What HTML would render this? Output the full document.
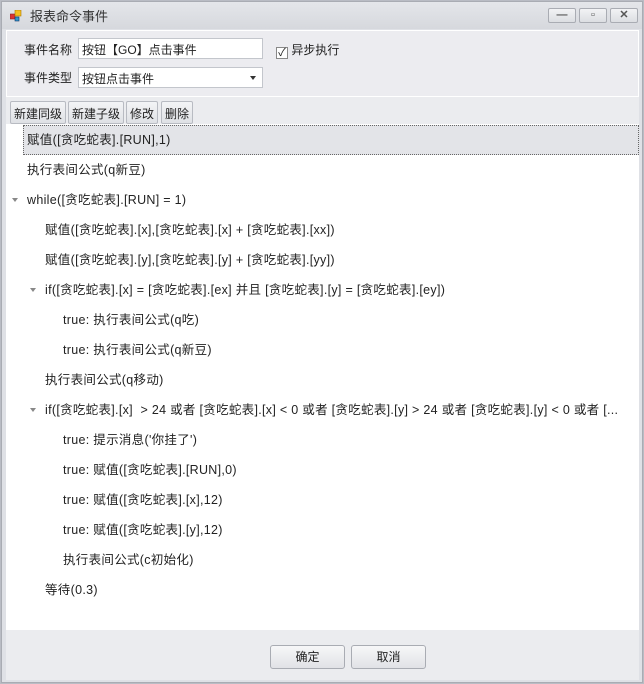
<!DOCTYPE html>
<html><head><meta charset="utf-8"><style>
*{box-sizing:border-box;margin:0;padding:0}
body{width:644px;height:684px;overflow:hidden;background:#b9bcc4;font-family:"Liberation Sans","Noto Sans CJK SC","WenQuanYi Zen Hei",sans-serif;font-size:12px;color:#222;position:relative}
.win{position:absolute;left:1px;top:1px;width:642px;height:682px;background:#dfe1e6;border:1px solid #a9acb3}
.title{position:absolute;left:0;top:0;width:640px;height:27px;background:linear-gradient(#e4e6ea,#d6d8dd)}
.title span{position:absolute;left:28px;top:4px;font-size:13px;color:#333}
.ic{position:absolute;left:8px;top:8px;width:12px;height:12px}
.tb{position:absolute;top:6px;width:28px;height:15px;border:1px solid #a9acb3;border-radius:2px;background:linear-gradient(#f2f3f5,#dcdee2);color:#555;text-align:center;font-size:11px;line-height:13px;font-weight:bold}
.client{position:absolute;left:4px;top:28px;width:633px;height:650px;background:#ebecef}
.top{position:absolute;left:0;top:0;width:633px;height:67px;border:1px solid #fff;background:#ececf0}
.lbl{position:absolute;font-size:12px}
.inp{position:absolute;background:#fff;border:1px solid #c3c6cc;height:21px;padding:2px 3px;font-size:12px}
.btn{position:absolute;top:71px;height:23px;border:1px solid #b8bbc2;border-radius:2px;background:linear-gradient(#f3f4f6,#dfe1e5);padding:3px 3px;font-size:12px}
.tree{position:absolute;left:0;top:94px;width:633px;height:506px;background:#fff}
.row{position:absolute;height:18px;white-space:nowrap;font-size:12.5px;letter-spacing:0.3px}
.arr{position:absolute;width:0;height:0;border-left:3px solid transparent;border-right:3px solid transparent;border-top:4px solid #888}
.sel{position:absolute;left:17px;top:1px;width:616px;height:30px;background:#e3e4e8;border:1px dotted #666}
.ok{position:absolute;top:615px;width:75px;height:24px;border:1px solid #a9acb3;border-radius:3px;background:linear-gradient(#f7f7f8,#e1e2e6);text-align:center;line-height:22px;font-size:12px}
</style></head><body>
<div class="win">
<div class="title">
<svg class="ic" viewBox="0 0 12 12"><rect x="0" y="4" width="5" height="5" fill="#d33" stroke="#822" stroke-width=".6"/><rect x="5" y="0" width="6" height="6" fill="#f4c020" stroke="#a70" stroke-width=".6"/><rect x="5" y="7" width="4" height="4" fill="#39c" stroke="#136" stroke-width=".6"/></svg>
<span>报表命令事件</span>
<div class="tb" style="left:546px">—</div>
<div class="tb" style="left:577px">▫</div>
<div class="tb" style="left:608px">✕</div>
</div>
<div class="client">
<div class="top">
<div class="lbl" style="left:17px;top:10px">事件名称</div>
<div class="inp" style="left:71px;top:7px;width:185px">按钮【GO】点击事件</div>
<div class="lbl" style="left:269px;top:10px"><span style="display:inline-block;width:12px;height:12px;border:1px solid #888;background:#fff;vertical-align:-2px;font-size:11px;line-height:10px;text-align:center">✓</span> 异步执行</div>
<div class="lbl" style="left:17px;top:38px">事件类型</div>
<div class="inp" style="left:71px;top:36px;width:185px">按钮点击事件<span style="position:absolute;right:6px;top:8px;border-left:3px solid transparent;border-right:3px solid transparent;border-top:4px solid #333"></span></div>
</div>
<div class="btn" style="left:4px">新建同级</div>
<div class="btn" style="left:62px">新建子级</div>
<div class="btn" style="left:120px">修改</div>
<div class="btn" style="left:155px">删除</div>
<div class="tree">
<div class="sel"></div>
<div class="row" style="left:21px;top:5px">赋值([贪吃蛇表].[RUN],1)</div>
<div class="row" style="left:21px;top:35px">执行表间公式(q新豆)</div>
<div class="arr" style="left:6px;top:74px"></div>
<div class="row" style="left:21px;top:65px">while([贪吃蛇表].[RUN] = 1)</div>
<div class="row" style="left:39px;top:95px">赋值([贪吃蛇表].[x],[贪吃蛇表].[x] + [贪吃蛇表].[xx])</div>
<div class="row" style="left:39px;top:125px">赋值([贪吃蛇表].[y],[贪吃蛇表].[y] + [贪吃蛇表].[yy])</div>
<div class="arr" style="left:24px;top:164px"></div>
<div class="row" style="left:39px;top:155px">if([贪吃蛇表].[x] = [贪吃蛇表].[ex] 并且 [贪吃蛇表].[y] = [贪吃蛇表].[ey])</div>
<div class="row" style="left:57px;top:185px">true: 执行表间公式(q吃)</div>
<div class="row" style="left:57px;top:215px">true: 执行表间公式(q新豆)</div>
<div class="row" style="left:39px;top:245px">执行表间公式(q移动)</div>
<div class="arr" style="left:24px;top:284px"></div>
<div class="row" style="left:39px;top:275px">if([贪吃蛇表].[x] &nbsp;&gt; 24 或者 [贪吃蛇表].[x] &lt; 0 或者 [贪吃蛇表].[y] &gt; 24 或者 [贪吃蛇表].[y] &lt; 0 或者 [...</div>
<div class="row" style="left:57px;top:305px">true: 提示消息('你挂了')</div>
<div class="row" style="left:57px;top:335px">true: 赋值([贪吃蛇表].[RUN],0)</div>
<div class="row" style="left:57px;top:365px">true: 赋值([贪吃蛇表].[x],12)</div>
<div class="row" style="left:57px;top:395px">true: 赋值([贪吃蛇表].[y],12)</div>
<div class="row" style="left:57px;top:425px">执行表间公式(c初始化)</div>
<div class="row" style="left:39px;top:455px">等待(0.3)</div>
</div>
<div class="ok" style="left:264px">确定</div>
<div class="ok" style="left:345px">取消</div>
</div>
</div>
</body></html>
